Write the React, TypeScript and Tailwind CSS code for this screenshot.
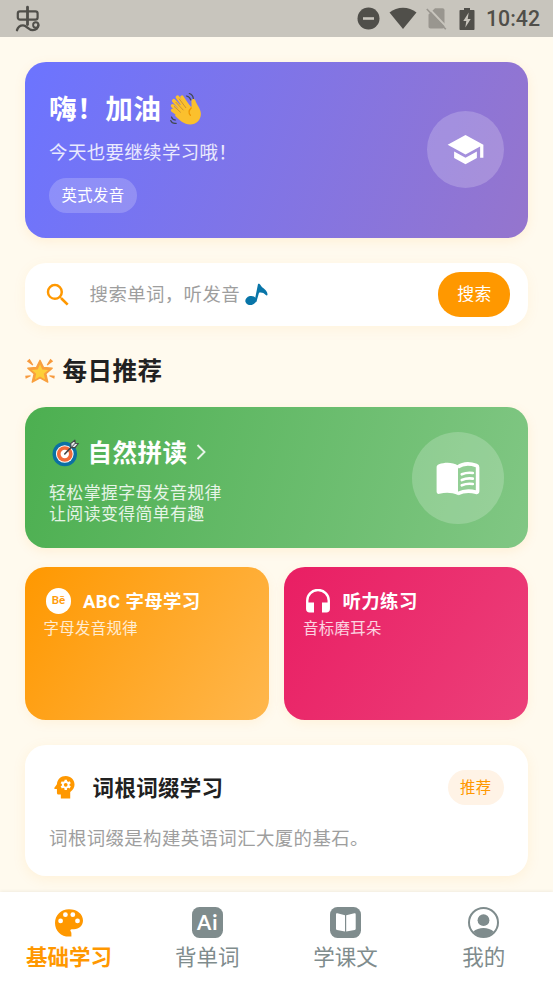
import type { ReactNode } from "react";
import { MdSchool, MdSearch } from "react-icons/md";

function BugGlyph() {
  return (
    <svg width="26" height="27" viewBox="0 0 26 27" fill="none" stroke="#504f4a" strokeWidth="2.400" strokeLinecap="round">
      <rect x="2.800" y="6.300" width="19.800" height="8.400" rx="2.200" strokeWidth="2.200" />
      <path d="M12.500 2.200v17.300" strokeWidth="2.800" />
      <path d="M2 25.200C3 21.800 5.400 20.400 8 20.400c4 0 5 4.700 9.800 4.700 3.500 0 5.500-2.200 5.500-5" />
      <circle cx="20.800" cy="20" r="2.700" strokeWidth="1.900" />
    </svg>
  );
}

function Wave() {
  return (
    <svg className="shrink-0" width="34" height="34" viewBox="0 0 34 34" fill="none" strokeLinecap="round">
      <g stroke="#fbc02d">
        <path d="M12 22 3.600 13.800" strokeWidth="3.600" />
        <path d="M15 20 4.800 8.800" strokeWidth="3.700" />
        <path d="M18 18 8.500 5.200" strokeWidth="3.700" />
        <path d="M20 16 13 5.200" strokeWidth="3.500" />
        <path d="M13 25 3.500 18.400" strokeWidth="3.300" />
      </g>
      <path d="M11 13 17 9l5.300 6.200c.9-2.500-.5-5.500.4-7.300 1-1.700 3.200-1 3.700.7 1 4 5.500 8.500 5.500 13.200 0 6.300-4.700 10.700-10.700 10.700C15 32.500 10 28 6 23.500z" fill="#fbc02d" />
      <path d="m5.300 14.600 6.200 5.600M6.900 10.300l7.300 7.700M10.300 7l6.500 8.700" stroke="#c58b32" strokeWidth=".9" />
      <path d="M22.200 16c-2.700 2.500-2.700 5.400-.8 7.300" stroke="#ee9500" strokeWidth="1.300" />
      <g stroke="#414850" strokeWidth="1.200">
        <path d="M17.500 4c2.200.5 3.700 2 4.300 4M20.300 1.500c2.400.8 3.800 2.500 4 5M2.500 25c.7 2 2 3 4 3M1.700 28.500c1 2.200 3 3.200 5.500 2.800" />
      </g>
    </svg>
  );
}

function Note() {
  return (
    <svg className="shrink-0" width="23" height="23" viewBox="0 0 23 23" fill="#0875a8">
      <ellipse cx="5.800" cy="17.500" rx="5.500" ry="4.500" transform="rotate(-12 5.800 17.500)" />
      <path d="M9.600 18 13 .9c1-.5 2 .1 2.800 1.500 1.500 2.900 6.600 4.300 6.700 8.800 0 1.300-1 1.700-1.700.8-2-2.400-4.600-2.900-6.800-2.300L11.400 19z" />
    </svg>
  );
}

function GlowStar() {
  return (
    <svg className="shrink-0" width="30" height="27" viewBox="0 0 30 27">
      <g fill="#f79a3e">
        <path d="M1.800 3.300 4.600.7l3.700 6-.8.800zM28.200 3.300 25.400.7l-3.700 6 .8.800zM.7 20.800l-.5-3 5.300-.5.200 1zM29.300 20.800l.5-3-5.300-.5-.2 1z" />
      </g>
      <path d="m15 2.300 3.600 7.200 8.600.7-6.300 5.600 1.900 8.400-7.800-4.300-7.800 4.300 1.900-8.400-6.300-5.600 8.600-.7z" fill="#f9a03e" stroke="#f9a03e" strokeWidth="1.300" strokeLinejoin="round" />
      <path d="m15 6.300 2.300 5.100 5.900.6-4.400 3.800 1.300 5.700-5.100-3-5.100 3 1.300-5.700L6.800 12l5.900-.6z" fill="#fdcf3a" />
    </svg>
  );
}

function Target() {
  return (
    <svg className="shrink-0" width="27.500" height="28" viewBox="0 0 28 28">
      <circle cx="13" cy="15" r="12.500" fill="#0b70a3" />
      <circle cx="13" cy="15" r="9" fill="#fff" />
      <circle cx="13" cy="15" r="8" fill="#f26b3a" />
      <circle cx="13" cy="15" r="4.300" fill="#fff" />
      <path d="m13 15 9.500-10" stroke="#414446" strokeWidth="1.600" strokeLinecap="round" />
      <path d="M19.500 8.500 19 4.500 23.300.8l.4 3.200 3.200.3-3.500 4.200z" fill="#e5e8ea" stroke="#414446" strokeWidth="1.100" strokeLinejoin="round" />
      <path d="m20 8 4-4.300" stroke="#414446" strokeWidth="1" />
    </svg>
  );
}

function OpenBook() {
  return (
    <svg className="mt-[3px]" width="44" height="34" viewBox="0 0 44 34" fill="none">
      <path d="M22 3.500C17 .2 9 0 3 2.300 1.400 2.900.6 3.800.6 5.500v24c0 2 1.300 2.800 3 2.300 6.500-1.900 12.500-1.300 18.400 1.300z" fill="#fff" />
      <path d="M21.700 5.100C26.500 1.700 34 1.300 40.300 3.500c.9.300 1.300.9 1.300 1.800v24c0 .9-.6 1.300-1.500 1-6.200-1.800-12.600-1.400-18.400 1.300" stroke="#fff" strokeWidth="3.600" strokeLinejoin="round" />
      <path d="M25.800 12.300c3.600-1.500 7.300-1.900 11-1.300M25.800 18c3.600-1.500 7.300-1.900 11-1.300M25.800 23.300c3.600-1.500 7.300-1.900 11-1.300" stroke="#fff" strokeWidth="2.700" strokeLinecap="round" />
    </svg>
  );
}

function HeadGear() {
  return (
    <svg width="21.500" height="24.500" viewBox="0 0 22 25">
      <path d="M12 1c5.300 0 9 3.800 9 8.800 0 3-1.300 5.500-4.400 7.500V24H7v-4H5c-1.300 0-2-.9-2-2v-3.700H1c-.7 0-1-.6-.6-1.200L3 9.500C3.200 4.500 7 1 12 1z" fill="#ff9800" />
      <path d="M12 4.700v10.600M7.400 7.350l9.200 5.300M16.600 7.350l-9.200 5.300" stroke="#fff" strokeWidth="2.500" />
      <circle cx="12" cy="10" r="3.900" fill="#fff" />
      <circle cx="12" cy="10" r="1.900" fill="#ff9800" />
    </svg>
  );
}

function BeBadge() {
  return (
    <span className="ml-[2px] flex size-[25.500px] items-center justify-center rounded-full bg-white font-['Roboto',sans-serif] text-[11.500px] leading-none font-semibold tracking-[-0.200px] text-[#ff9c0a]">
      Bē
    </span>
  );
}

function Headphones() {
  return (
    <svg className="ml-[3px]" width="24" height="24" viewBox="0 0 24 24" fill="none">
      <path d="M1.250 14V11.500a10.750 10.500 0 0 1 21.500 0V14" stroke="#fff" strokeWidth="2.400" />
      <path d="M.05 13.500H8v10H3.500C1.500 23.500.05 22 .05 20zM23.950 13.500H16v10h4.500c2 0 3.450-1.500 3.450-3.500z" fill="#fff" />
    </svg>
  );
}

function Palette() {
  return (
    <svg width="28" height="28" viewBox="0 0 28 28">
      <path d="M14 .2c8 0 14 4.700 14 11.300 0 5-4 8.700-9 8.700h-2.200c-1.300 0-1.900 1.300-1 2.400.5.600.6 1.200.6 2v3H14C6 27.600 0 21.600 0 13.900S6 .2 14 .2z" fill="#ff9800" />
      <g fill="#fff">
        <circle cx="5.600" cy="11.900" r="2.400" />
        <circle cx="10.400" cy="5.700" r="2.400" />
        <circle cx="17.800" cy="5.700" r="2.400" />
        <circle cx="22.500" cy="11.900" r="2.400" />
      </g>
    </svg>
  );
}

function AiBadge() {
  return (
    <div className="flex size-[31px] items-center justify-center rounded-[7.500px] bg-[#7f8c8d] pl-[1px] font-['Lato',sans-serif] text-[20.500px] leading-none font-bold tracking-[1.200px] text-white">
      Ai
    </div>
  );
}

function BookBadge() {
  return (
    <svg width="31" height="31" viewBox="0 0 31 31">
      <rect width="31" height="31" rx="7.500" fill="#7f8c8d" />
      <path d="M6 7.500c0-1 .5-1.400 1.400-1.200l7.600 2v16.300L7 23c-.7-.2-1-.5-1-1.200zM25.700 7.500c0-1-.5-1.400-1.400-1.200l-8.100 2v16.300l8.500-1.600c.7-.2 1-.5 1-1.200z" fill="#fff" />
    </svg>
  );
}

function PersonBadge() {
  return (
    <svg width="31" height="31" viewBox="0 0 31 31" fill="#7f8c8d">
      <circle cx="15.500" cy="15.500" r="14.500" fill="none" stroke="#7f8c8d" strokeWidth="2" />
      <circle cx="15.500" cy="13.200" r="5.900" />
      <path d="M5.300 24.500c5-4.800 15.400-4.800 20.400 0-5 7-15.400 7-20.400 0z" />
    </svg>
  );
}

function StatusBar() {
  return (
    <header className="flex h-[37px] shrink-0 items-center justify-between bg-[#c8c5bd] pr-[12px] pl-[15px] text-[#504f4a]">
      <BugGlyph />
      <div className="flex items-center">
        <svg width="23" height="23" viewBox="0 0 23 23">
          <circle cx="11.500" cy="11.500" r="11" fill="#504f4a" />
          <path d="M6 11.500h11" stroke="#c8c5bd" strokeWidth="2.600" />
        </svg>
        <svg className="ml-[9px]" width="28" height="23" viewBox="0 0 28 23">
          <path d="M.5 5.500C8-.8 20-.8 27.500 5.500L14 22z" fill="#504f4a" />
        </svg>
        <svg className="ml-[9px]" width="21" height="23" viewBox="0 0 21 23">
          <path d="M9 1.200h7.500c1.200 0 2 .8 2 2v16.300c0 1.200-.8 2-2 2H4.500c-1.200 0-2-.8-2-2V7.500z" fill="#99968f" />
          <path d="m2.800 1.200 19 20" stroke="#c8c5bd" strokeWidth="2" />
          <path d="m.8 2 19 20.300" stroke="#99968f" strokeWidth="1.600" />
        </svg>
        <svg className="ml-[12px]" width="16" height="24" viewBox="0 0 16 24">
          <path d="M5 1h6v2h3.500c.6 0 1 .4 1 1v18c0 .6-.4 1-1 1h-13c-.6 0-1-.4-1-1V4c0-.6.4-1 1-1H5z" fill="#504f4a" />
          <path d="M9.700 5.500 4.300 14h3l-1 6.500 5.400-8.500H8.700z" fill="#c8c5bd" />
        </svg>
        <span className="ml-[11px] w-[55px] pt-[1px] font-['Roboto',sans-serif] text-[21.300px] leading-none font-medium tracking-normal">10:42</span>
      </div>
    </header>
  );
}

function Feature({ icon, title, text, className }: { icon: ReactNode; title: string; text: string; className: string }) {
  return (
    <article className={"h-[153px] flex-1 rounded-[21px] pt-[18px] pl-[19px] text-white shadow-[0_3px_12px_rgba(255,152,0,0.08)] " + className}>
      <div className="flex h-[32px] items-center">
        <div className="flex w-[39.500px] shrink-0 items-center">{icon}</div>
        <h3 className="pt-[1px] text-[18.430px] leading-[31px] font-bold whitespace-nowrap">{title}</h3>
      </div>
      <p className="text-[15.360px] leading-[25px] text-white/80">{text}</p>
    </article>
  );
}

function Tab({ icon, label, active = false }: { icon: ReactNode; label: string; active?: boolean }) {
  return (
    <div className="flex flex-1 flex-col items-center pt-[15px]">
      <div className="flex h-[31px] items-center justify-center">{icon}</div>
      <span className={"mt-[4px] text-[21.500px] leading-[32px] tracking-normal " + (active ? "font-bold text-[#ff9800]" : "text-[#7f8c8d]")}>{label}</span>
    </div>
  );
}

export default function App() {
  return (
    <div className="flex h-[983px] w-[553px] flex-col overflow-hidden bg-[#fffaee] font-['Roboto','Noto_Sans_CJK_SC',sans-serif] tracking-[0.384px]">
      <StatusBar />
      <main className="flex min-h-0 flex-1 flex-col px-[24.600px] pt-[24.500px]">
        <section className="flex h-[176.500px] shrink-0 items-center justify-between rounded-[21px] bg-[linear-gradient(109.300deg,#6c74ff,#9575cd)] pr-[24.500px] pl-[24.500px] text-white shadow-[0_3px_12px_rgba(255,152,0,0.1)]">
          <div className="flex h-full flex-col items-start pt-[27px]">
            <div className="flex h-[41px] items-center gap-[8px]">
              <h1 className="text-[27.650px] leading-[41px] font-bold">嗨！加油</h1>
              <Wave />
            </div>
            <p className="mt-[9px] text-[18.430px] leading-[27px] text-white/85">今天也要继续学习哦！</p>
            <span className="mt-[12px] flex h-[35.500px] items-center rounded-[18px] bg-white/20 px-[12.500px] pt-[3px] text-[15.360px]">英式发音</span>
          </div>
          <div className="flex size-[77px] items-center justify-center rounded-full bg-white/20">
            <MdSchool className="ml-[1px] size-[39px]" />
          </div>
        </section>

        <section className="mt-[25px] flex h-[62.500px] shrink-0 items-center rounded-[21px] bg-white pr-[18px] pl-[18px] shadow-[0_3px_14px_rgba(255,152,0,0.07)]">
          <MdSearch className="mt-[1px] ml-[0.500px] size-[30px] text-[#ff9800]" />
          <span className="ml-[16.500px] pt-[2px] text-[18.430px] text-[#9e9e9e]">搜索单词，听发音</span>
          <div className="ml-[5px]"><Note /></div>
          <button className="ml-auto h-[44.500px] w-[72px] rounded-[22px] bg-[#ff9800] pt-[1px] text-[16.900px] tracking-[0.384px] text-white">搜索</button>
        </section>

        <div className="mt-[25px] flex h-[41px] shrink-0 items-center gap-[8px]">
          <GlowStar />
          <h2 className="text-[24.580px] leading-[41px] font-bold text-[#212121]">每日推荐</h2>
        </div>

        <section className="mt-[15.500px] flex h-[141px] shrink-0 items-center justify-between rounded-[21px] bg-[linear-gradient(105.600deg,#4caf50,#81c784)] pr-[24.500px] pl-[24.500px] text-white shadow-[0_3px_12px_rgba(255,152,0,0.1)]">
          <div className="flex h-full flex-col pt-[27px]">
            <div className="flex h-[40px] items-center">
              <div className="w-[38.500px] pb-[2px] pl-[2.500px]"><Target /></div>
              <h2 className="text-[24.580px] leading-[40px] font-bold">自然拼读</h2>
              <svg className="mb-[4px] ml-[8px]" width="12" height="18" viewBox="0 0 12 18" fill="none" stroke="white" strokeOpacity=".85" strokeWidth="1.900">
                <path d="m2.500 2 7 7-7 7" />
              </svg>
            </div>
            <p className="mt-[8.500px] text-[16.900px] leading-[21.500px] text-white/85">轻松掌握字母发音规律<br />让阅读变得简单有趣</p>
          </div>
          <div className="flex size-[92px] items-center justify-center rounded-full bg-white/20">
            <OpenBook />
          </div>
        </section>

        <section className="mt-[19px] flex shrink-0 gap-[15px]">
          <Feature className="bg-[linear-gradient(122.100deg,#ff9800,#ffb74d)]" icon={<BeBadge />} title="ABC 字母学习" text="字母发音规律" />
          <Feature className="bg-[linear-gradient(122.100deg,#e91e63,#ec407a)]" icon={<Headphones />} title="听力练习" text="音标磨耳朵" />
        </section>

        <section className="mt-[25px] h-[130.500px] shrink-0 rounded-[21px] bg-white px-[24.500px] pt-[24.500px] shadow-[0_3px_14px_rgba(255,152,0,0.09)]">
          <div className="flex h-[35.500px] items-center">
            <div className="w-[43.500px] pl-[4.500px]"><HeadGear /></div>
            <h2 className="pt-[2px] text-[21.500px] leading-[35px] font-bold tracking-[0.300px] text-[#212121]">词根词缀学习</h2>
            <span className="ml-auto flex h-[35.500px] items-center rounded-[18px] bg-[#fff3e6] px-[12.300px] pt-[3px] text-[15.360px] text-[#ff9800]">推荐</span>
          </div>
          <p className="mt-[19px] text-[18.430px] leading-[30px] text-[#9e9e9e]">词根词缀是构建英语词汇大厦的基石。</p>
        </section>
      </main>
      <nav className="flex h-[91px] shrink-0 bg-white shadow-[0_-1px_3px_rgba(0,0,0,0.06)]">
        <Tab active icon={<Palette />} label="基础学习" />
        <Tab icon={<AiBadge />} label="背单词" />
        <Tab icon={<BookBadge />} label="学课文" />
        <Tab icon={<PersonBadge />} label="我的" />
      </nav>
    </div>
  );
}
